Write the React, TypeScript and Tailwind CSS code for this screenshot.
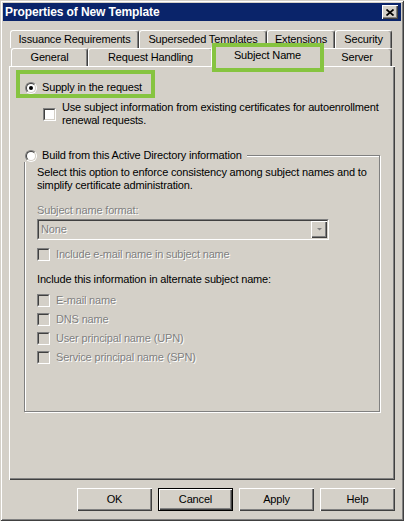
import type { ReactNode } from "react";

// Classic Windows 2000 style property sheet: "Subject Name" tab of a certificate template.

const ROW1_TABS = [
  { label: "Issuance Requirements", width: "w-[129px]" },
  { label: "Superseded Templates", width: "w-[128px]" },
  { label: "Extensions", width: "w-[68px]" },
  { label: "Security", width: "w-[57px]" },
];

const ALT_NAMES = ["E-mail name", "DNS name", "User principal name (UPN)", "Service principal name (SPN)"];

function Radio({ checked }: { checked?: boolean }) {
  return (
    <span className="flex h-[12px] w-[12px] shrink-0 items-center justify-center rounded-full border border-t-[#808080] border-l-[#808080] border-r-white border-b-white">
      <span className="flex h-[10px] w-[10px] items-center justify-center rounded-full border border-t-[#404040] border-l-[#404040] border-r-[#d4d0c8] border-b-[#d4d0c8] bg-white">
        {checked && <span className="h-[4px] w-[4px] rounded-full bg-black" />}
      </span>
    </span>
  );
}

function Checkbox({ disabled }: { disabled?: boolean }) {
  return (
    <span className="flex h-[13px] w-[13px] shrink-0 border border-t-[#808080] border-l-[#808080] border-r-white border-b-white">
      <span
        className={
          disabled
            ? "h-full w-full border border-t-[#404040] border-l-[#404040] border-r-[#d4d0c8] border-b-[#d4d0c8] bg-[#d4d0c8]"
            : "h-full w-full border border-t-[#404040] border-l-[#404040] border-r-[#d4d0c8] border-b-[#d4d0c8] bg-white"
        }
      />
    </span>
  );
}

function DisabledText({ children }: { children: ReactNode }) {
  return <span className="whitespace-nowrap text-[#808080] text-shadow-[1px_1px_0_#ffffff]">{children}</span>;
}

function Tab({ label, width }: { label: string; width: string }) {
  return (
    <div
      className={`${width} flex h-[18px] items-center justify-center rounded-t-[3px] border-t border-l border-r border-t-white border-l-white border-r-[#404040] shadow-[inset_-1px_0_#808080] whitespace-nowrap`}
    >
      {label}
    </div>
  );
}

function Button({ label, isDefault }: { label: string; isDefault?: boolean }) {
  if (isDefault) {
    return (
      <div className="h-[23px] w-[75px] border border-black">
        <div className="flex h-full w-full items-center justify-center shadow-[inset_1px_1px_#fff,inset_-1px_-1px_#404040,inset_-2px_-2px_#808080]">
          {label}
        </div>
      </div>
    );
  }
  return (
    <div className="flex h-[23px] w-[75px] items-center justify-center shadow-[inset_1px_1px_#fff,inset_-1px_-1px_#404040,inset_-2px_-2px_#808080]">
      {label}
    </div>
  );
}

export default function App() {
  return (
    <div className="flex h-[521px] w-[404px] flex-col bg-[#d4d0c8] p-[3px] font-['Liberation_Sans',Arial,sans-serif] text-[11px] leading-[13px] tracking-[-0.16px] text-black shadow-[inset_1px_1px_#d4d0c8,inset_-1px_-1px_#404040,inset_2px_2px_#ffffff,inset_-2px_-2px_#808080]">
      {/* title bar */}
      <div className="flex h-[18px] items-center justify-between bg-[#0a246a] pl-[2px] pr-[3px]">
        <span className="text-[12px] font-bold tracking-[-0.1px] text-white">Properties of New Template</span>
        <div className="flex h-[14px] w-[16px] items-center justify-center bg-[#d4d0c8] shadow-[inset_1px_1px_#fff,inset_-1px_-1px_#404040,inset_-2px_-2px_#808080]">
          <svg width="8" height="7" viewBox="0 0 8 7">
            <path d="M0.5 0.5 L7.5 6.5 M7.5 0.5 L0.5 6.5" stroke="#000" strokeWidth="1.7" />
          </svg>
        </div>
      </div>

      {/* tab strip, two rows */}
      <div className="mt-[9px] flex flex-col">
        <div className="ml-[7px] flex">
          {ROW1_TABS.map((t) => (
            <Tab key={t.label} label={t.label} width={t.width} />
          ))}
        </div>
        <div className="ml-[8px] flex items-end">
          <Tab label="General" width="w-[77px]" />
          <Tab label="Request Handling" width="w-[125px]" />
          <div className="relative z-10 -mx-[2px] -mt-[2px] -mb-[1px] flex h-[21px] w-[113px] items-start justify-center rounded-t-[3px] border-t border-l border-r border-t-white border-l-white border-r-[#404040] bg-[#d4d0c8] pt-[2px] shadow-[inset_-1px_0_#808080]">
            Subject Name
            <div className="absolute -top-[4px] -bottom-[5px] left-0 -right-[1px] border-4 border-[#86c440]" />
          </div>
          <Tab label="Server" width="w-[70px]" />
        </div>
      </div>

      {/* tab page */}
      <div className="mx-[6px] flex h-[414px] flex-col pl-[7px] pt-[4px] shadow-[inset_1px_1px_#fff,inset_-1px_-1px_#404040,inset_-2px_-2px_#808080]">
        <div className="h-[28px] w-[139px] border-4 border-[#86c440] pl-[5px] pt-[7px]">
          <div className="flex items-center gap-[5px] whitespace-nowrap">
            <Radio checked />
            <span>Supply in the request</span>
          </div>
        </div>

        <div className="ml-[27px] mt-[3px] flex items-center gap-[6px]">
          <Checkbox />
          <span className="whitespace-nowrap">
            Use subject information from existing certificates for autoenrollment
            <br />
            renewal requests.
          </span>
        </div>

        <div className="ml-[8px] mt-[28px] h-[257px] w-[356px] border border-[#808080] shadow-[inset_1px_1px_#fff,1px_1px_#fff]">
          <div className="-ml-[1px] -mt-[7px] flex w-fit items-center gap-[5px] bg-[#d4d0c8] pl-[1px] pr-[5px] whitespace-nowrap">
            <Radio />
            <span>Build from this Active Directory information</span>
          </div>

          <div className="flex flex-col pl-[12px]">
            <p className="mt-[4px] whitespace-nowrap">
              Select this option to enforce consistency among subject names and to
              <br />
              simplify certificate administration.
            </p>

            <div className="mt-[12px]">
              <DisabledText>Subject name format:</DisabledText>
            </div>

            <div className="mt-[2px] flex h-[21px] w-[292px] items-center justify-between border border-t-[#808080] border-l-[#808080] border-r-white border-b-white">
              <div className="flex h-full w-full items-center justify-between border border-t-[#404040] border-l-[#404040] border-r-[#d4d0c8] border-b-[#d4d0c8] pl-[2px]">
                <DisabledText>None</DisabledText>
                <div className="flex h-[17px] w-[16px] items-center justify-center shadow-[inset_1px_1px_#fff,inset_-1px_-1px_#404040,inset_-2px_-2px_#808080]">
                  <svg width="7" height="5" viewBox="0 0 7 5">
                    <path d="M1 1 H6 L3.5 3.5 Z" fill="#808080" />
                  </svg>
                </div>
              </div>
            </div>

            <div className="mt-[8px] flex items-center gap-[6px]">
              <Checkbox disabled />
              <DisabledText>Include e-mail name in subject name</DisabledText>
            </div>

            <p className="mt-[12px] whitespace-nowrap">Include this information in alternate subject name:</p>

            <div className="mt-[8px] flex flex-col gap-[6px]">
              {ALT_NAMES.map((name) => (
                <div key={name} className="flex items-center gap-[6px]">
                  <Checkbox disabled />
                  <DisabledText>{name}</DisabledText>
                </div>
              ))}
            </div>
          </div>
        </div>
      </div>

      {/* dialog buttons */}
      <div className="mr-[6px] mt-[8px] flex justify-end gap-[6px]">
        <Button label="OK" />
        <Button label="Cancel" isDefault />
        <Button label="Apply" />
        <Button label="Help" />
      </div>
    </div>
  );
}
